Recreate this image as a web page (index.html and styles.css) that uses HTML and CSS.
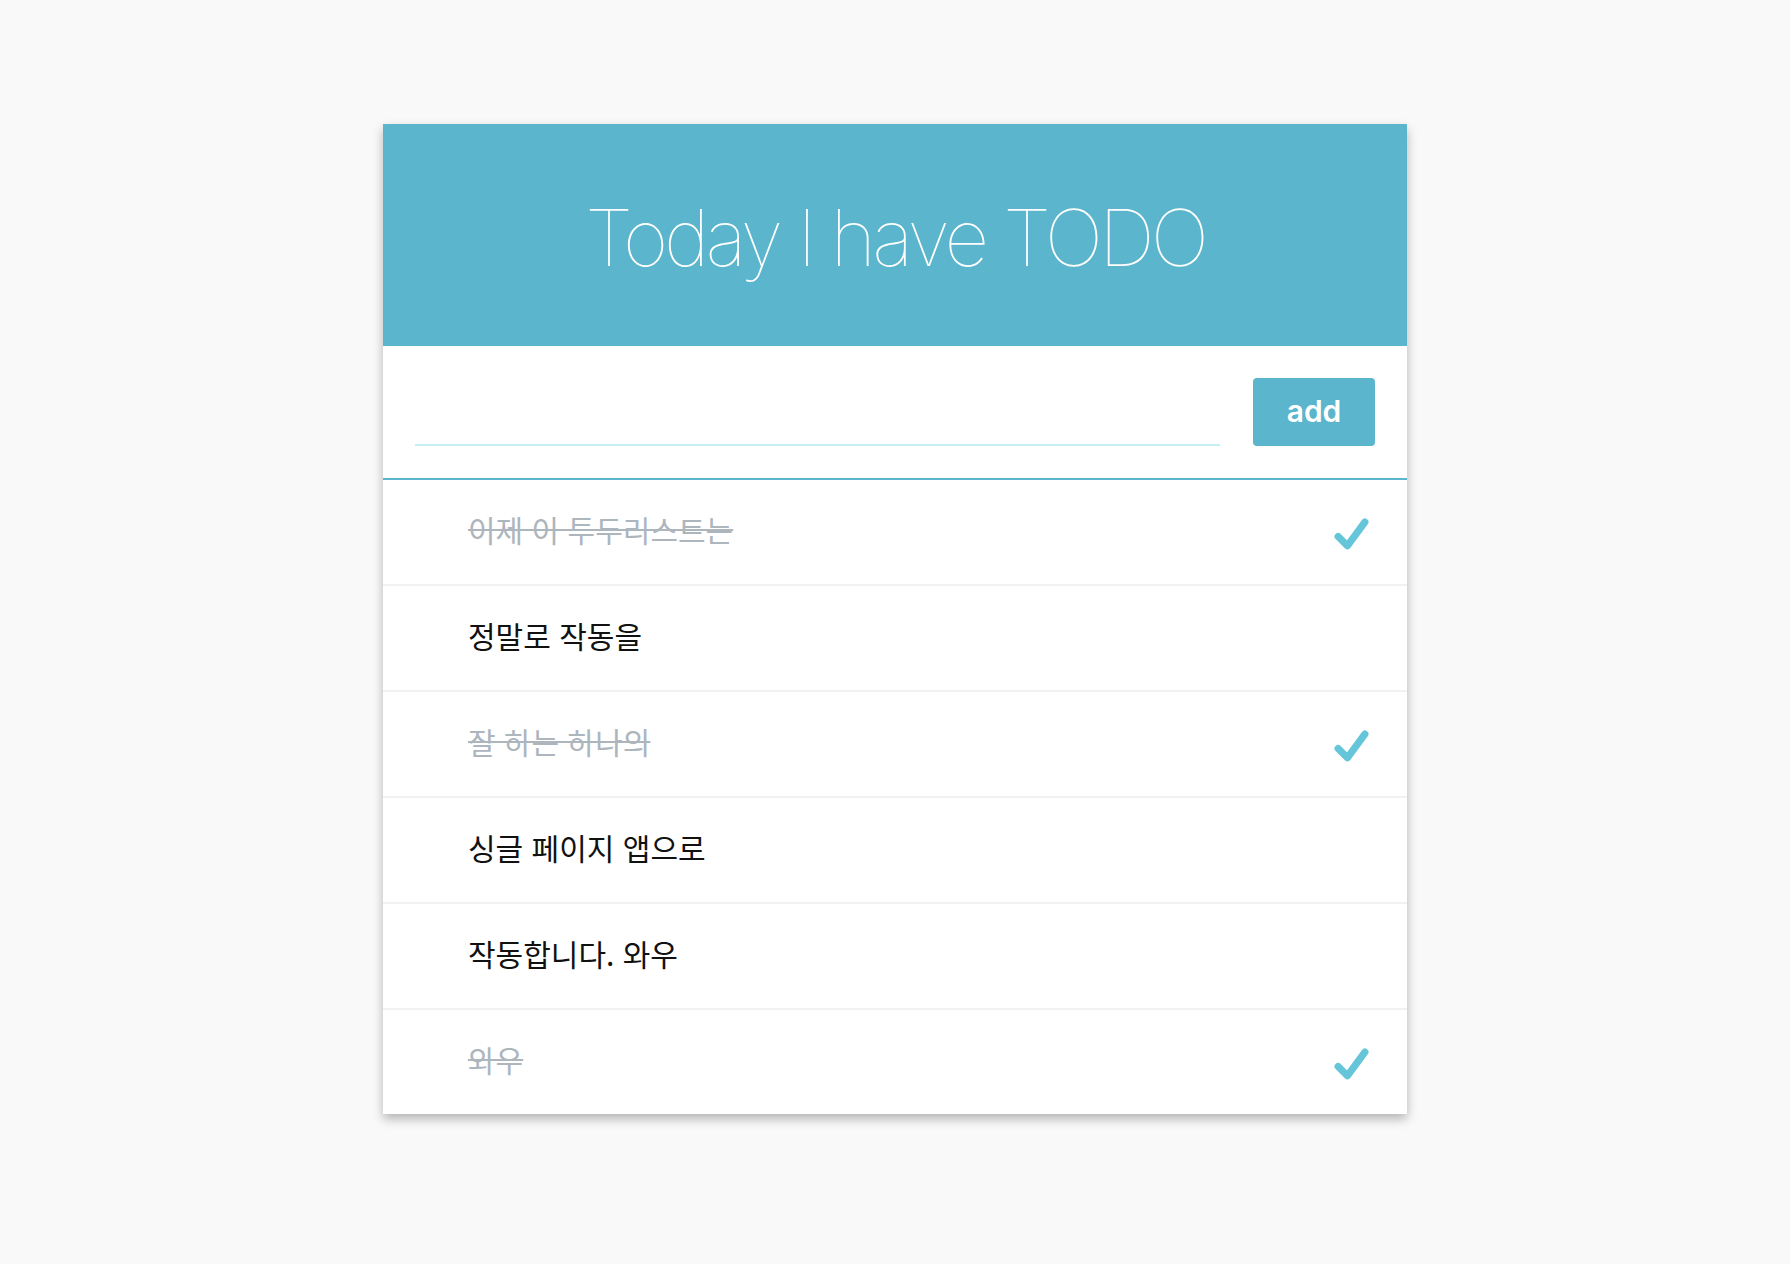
FILE: index.html
```html
<!DOCTYPE html>
<html lang="ko">
<head>
<meta charset="utf-8">
<title>Today I have TODO</title>
<link rel="stylesheet" href="styles.css">
</head>
<body>
<div class="card">
  <header class="header">
    <h1 class="title">Today I have TODO</h1>
  </header>
  <form class="form">
    <input class="input" type="text">
    <button class="add" type="button">add</button>
  </form>
  <ul class="list">
    <li class="item done"><span class="text">이제 이 투두리스트는</span>
      <svg class="check" viewBox="0 0 36 34"><path d="M5 19 L14 28 L31 5" fill="none" stroke="#66c6d9" stroke-width="7" stroke-linecap="round" stroke-linejoin="round"/></svg></li>
    <li class="item"><span class="text">정말로 작동을</span></li>
    <li class="item done"><span class="text">잘 하는 하나의</span>
      <svg class="check" viewBox="0 0 36 34"><path d="M5 19 L14 28 L31 5" fill="none" stroke="#66c6d9" stroke-width="7" stroke-linecap="round" stroke-linejoin="round"/></svg></li>
    <li class="item"><span class="text">싱글 페이지 앱으로</span></li>
    <li class="item"><span class="text">작동합니다. 와우</span></li>
    <li class="item done"><span class="text">와우</span>
      <svg class="check" viewBox="0 0 36 34"><path d="M5 19 L14 28 L31 5" fill="none" stroke="#66c6d9" stroke-width="7" stroke-linecap="round" stroke-linejoin="round"/></svg></li>
  </ul>
</div>
</body>
</html>
```
FILE: styles.css
```css
html, body {
  margin: 0;
  padding: 0;
  background: #f9f9f9;
}
body {
  padding-top: 124px;
  padding-bottom: 40px;
  font-family: "Inter", "Noto Sans CJK KR", sans-serif;
}
.card {
  width: 1024px;
  margin: 0 auto;
  background: #ffffff;
  box-shadow: 0 5px 10px rgba(0, 0, 0, 0.28);
}
.header {
  height: 222px;
  background: #5bb5cc;
  display: flex;
  align-items: center;
  justify-content: center;
}
.title {
  margin: 0;
  color: #ffffff;
  font-family: "Inter", sans-serif;
  font-weight: 100;
  font-size: 78px;
  letter-spacing: -4px;
  line-height: 1;
  padding-top: 6px;
}
.form {
  margin: 0;
  height: 134px;
  box-sizing: border-box;
  border-bottom: 2px solid #5bb5cc;
  display: flex;
  align-items: flex-start;
  padding: 32px 32px 0 32px;
  gap: 33px;
}
.input {
  flex: 1;
  height: 68px;
  box-sizing: border-box;
  border: none;
  border-bottom: 2px solid #c6eef5;
  outline: none;
  background: transparent;
  font-size: 28px;
  padding: 0;
  margin: 0;
}
.add {
  width: 122px;
  height: 68px;
  border: none;
  border-radius: 4px;
  background: #5bb5cc;
  color: #ffffff;
  font-family: "Inter", sans-serif;
  font-weight: 600;
  font-size: 30px;
  padding: 0 0 2px 0;
  margin: 0;
}
.list {
  list-style: none;
  margin: 0;
  padding: 0;
}
.item {
  height: 104px;
  display: flex;
  align-items: center;
  justify-content: space-between;
  padding: 0 37px 0 85px;
  border-bottom: 2px solid #f2f2f2;
}
.item:last-child {
  border-bottom: none;
}
.text {
  font-family: "Noto Sans CJK KR", sans-serif;
  font-size: 30px;
  color: #111111;
  margin-bottom: 6px;
}
.done .text {
  color: #adb5bd;
  text-decoration: line-through;
  text-decoration-thickness: 2px;
}
.check {
  width: 37px;
  height: 35px;
  display: block;
  margin-top: 4px;
}
```
